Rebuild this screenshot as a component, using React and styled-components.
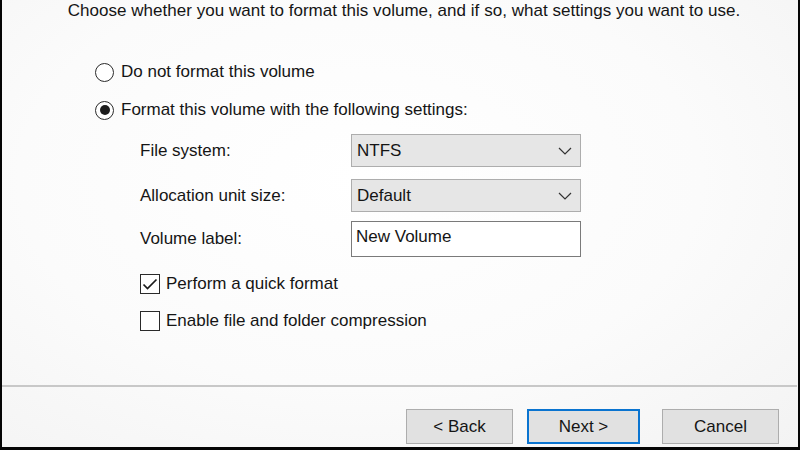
import React from "react";
import styled, { createGlobalStyle } from "styled-components";

const GlobalStyle = createGlobalStyle`
  html, body {
    margin: 0;
    padding: 0;
    background: #fff;
  }
  * {
    box-sizing: border-box;
  }
`;

const Frame = styled.div`
  display: flex;
  flex-direction: column;
  width: 800px;
  height: 450px;
  overflow: hidden;

  font-family: "Liberation Sans", Arial, sans-serif;
  font-size: 17px;
  color: #151515;

  background: radial-gradient(ellipse at 45% 40%, #ffffff 0%, #fbfbfb 55%, #f3f3f3 100%);
  border-left: 2px solid #050505;
  border-right: 2px solid #050505;
  border-bottom: 3px solid #050505;
`;

const Heading = styled.div`
  padding: 1px 0 0 8px;
  line-height: 20px;
  text-align: center;
  letter-spacing: 0.03px;
  white-space: nowrap;
`;

const Options = styled.div`
  display: flex;
  flex-direction: column;
  padding: 41px 0 0 93px;
`;

const RadioRow = styled.label`
  display: flex;
  align-items: center;
  gap: 7px;
  height: 20px;
  margin-bottom: ${props => props.spacing}px;
`;

const RadioCircle = styled.span`
  display: flex;
  align-items: center;
  justify-content: center;
  width: 19px;
  height: 19px;
  border: 1.5px solid #2a2a2a;
  border-radius: 50%;
  background: #fff;

  &::after {
    content: "";
    display: ${props => (props.checked ? "block" : "none")};
    width: 10px;
    height: 10px;
    border-radius: 50%;
    background: #1c1c1c;
  }
`;

const Settings = styled.div`
  display: flex;
  flex-direction: column;
  margin: 14px 0 0 45px;
`;

const FieldRow = styled.div`
  display: grid;
  grid-template-columns: 211px 230px;
  align-items: center;
  margin-top: ${props => props.top}px;
`;

const FieldLabel = styled.span`
  line-height: 20px;
`;

const Select = styled.div`
  display: flex;
  align-items: center;
  justify-content: space-between;
  height: 33px;
  padding: 0 8px 0 5px;
  background: #e6e6e6;
  border: 1px solid #adadad;
`;

const TextBox = styled.div`
  display: flex;
  align-items: center;
  height: 36px;
  padding: 0 4px 4px;
  background: #fff;
  border: 1px solid #7a7a7a;
`;

const Checks = styled.div`
  display: flex;
  flex-direction: column;
  gap: 17px;
  margin: 17px 0 0 45px;
`;

const CheckRow = styled.label`
  display: flex;
  align-items: center;
  gap: 6px;
  height: 20px;
`;

const CheckBox = styled.span`
  display: flex;
  align-items: center;
  justify-content: center;
  width: 20px;
  height: 20px;
  border: 1.5px solid #2a2a2a;
  background: #fff;
`;

const Spacer = styled.div`
  flex: 1;
`;

const Separator = styled.div`
  height: 2px;
  background: #c8c8c8;
  margin-right: 1px;
`;

const Footer = styled.div`
  display: flex;
  justify-content: flex-end;
  padding: 22px 19px 3px 0;
`;

const Button = styled.div`
  display: flex;
  align-items: center;
  justify-content: center;
  width: ${props => props.width}px;
  height: 35px;
  margin-left: ${props => props.gap}px;
  background: #e1e1e1;
  border: ${props => (props.primary ? "2px solid #0a74d0" : "1px solid #adadad")};
  font-size: 17px;
`;

function Chevron() {
  return (
    <svg width="14" height="8" viewBox="0 0 14 8">
      <polyline points="1,1 7,7 13,1" fill="none" stroke="#333" strokeWidth="1.2" />
    </svg>
  );
}

function Tick() {
  return (
    <svg width="16" height="13" viewBox="0 0 16 13">
      <polyline points="1.5,6.5 5.5,10.5 14.5,1.5" fill="none" stroke="#1a1a1a" strokeWidth="1.7" />
    </svg>
  );
}

export default function App() {
  return (
    <>
      <GlobalStyle />
      <Frame>
        <Heading>
          Choose whether you want to format this volume, and if so, what settings you want to use.
        </Heading>
        <Options>
          <RadioRow spacing={18}>
            <RadioCircle />
            Do not format this volume
          </RadioRow>
          <RadioRow spacing={0}>
            <RadioCircle checked />
            Format this volume with the following settings:
          </RadioRow>
          <Settings>
            <FieldRow top={0}>
              <FieldLabel>File system:</FieldLabel>
              <Select>
                NTFS
                <Chevron />
              </Select>
            </FieldRow>
            <FieldRow top={12}>
              <FieldLabel>Allocation unit size:</FieldLabel>
              <Select>
                Default
                <Chevron />
              </Select>
            </FieldRow>
            <FieldRow top={9}>
              <FieldLabel>Volume label:</FieldLabel>
              <TextBox>New Volume</TextBox>
            </FieldRow>
          </Settings>
          <Checks>
            <CheckRow>
              <CheckBox>
                <Tick />
              </CheckBox>
              Perform a quick format
            </CheckRow>
            <CheckRow>
              <CheckBox />
              Enable file and folder compression
            </CheckRow>
          </Checks>
        </Options>
        <Spacer />
        <Separator />
        <Footer>
          <Button width={107} gap={0}>&lt; Back</Button>
          <Button width={113} gap={14} primary>Next &gt;</Button>
          <Button width={117} gap={22}>Cancel</Button>
        </Footer>
      </Frame>
    </>
  );
}
